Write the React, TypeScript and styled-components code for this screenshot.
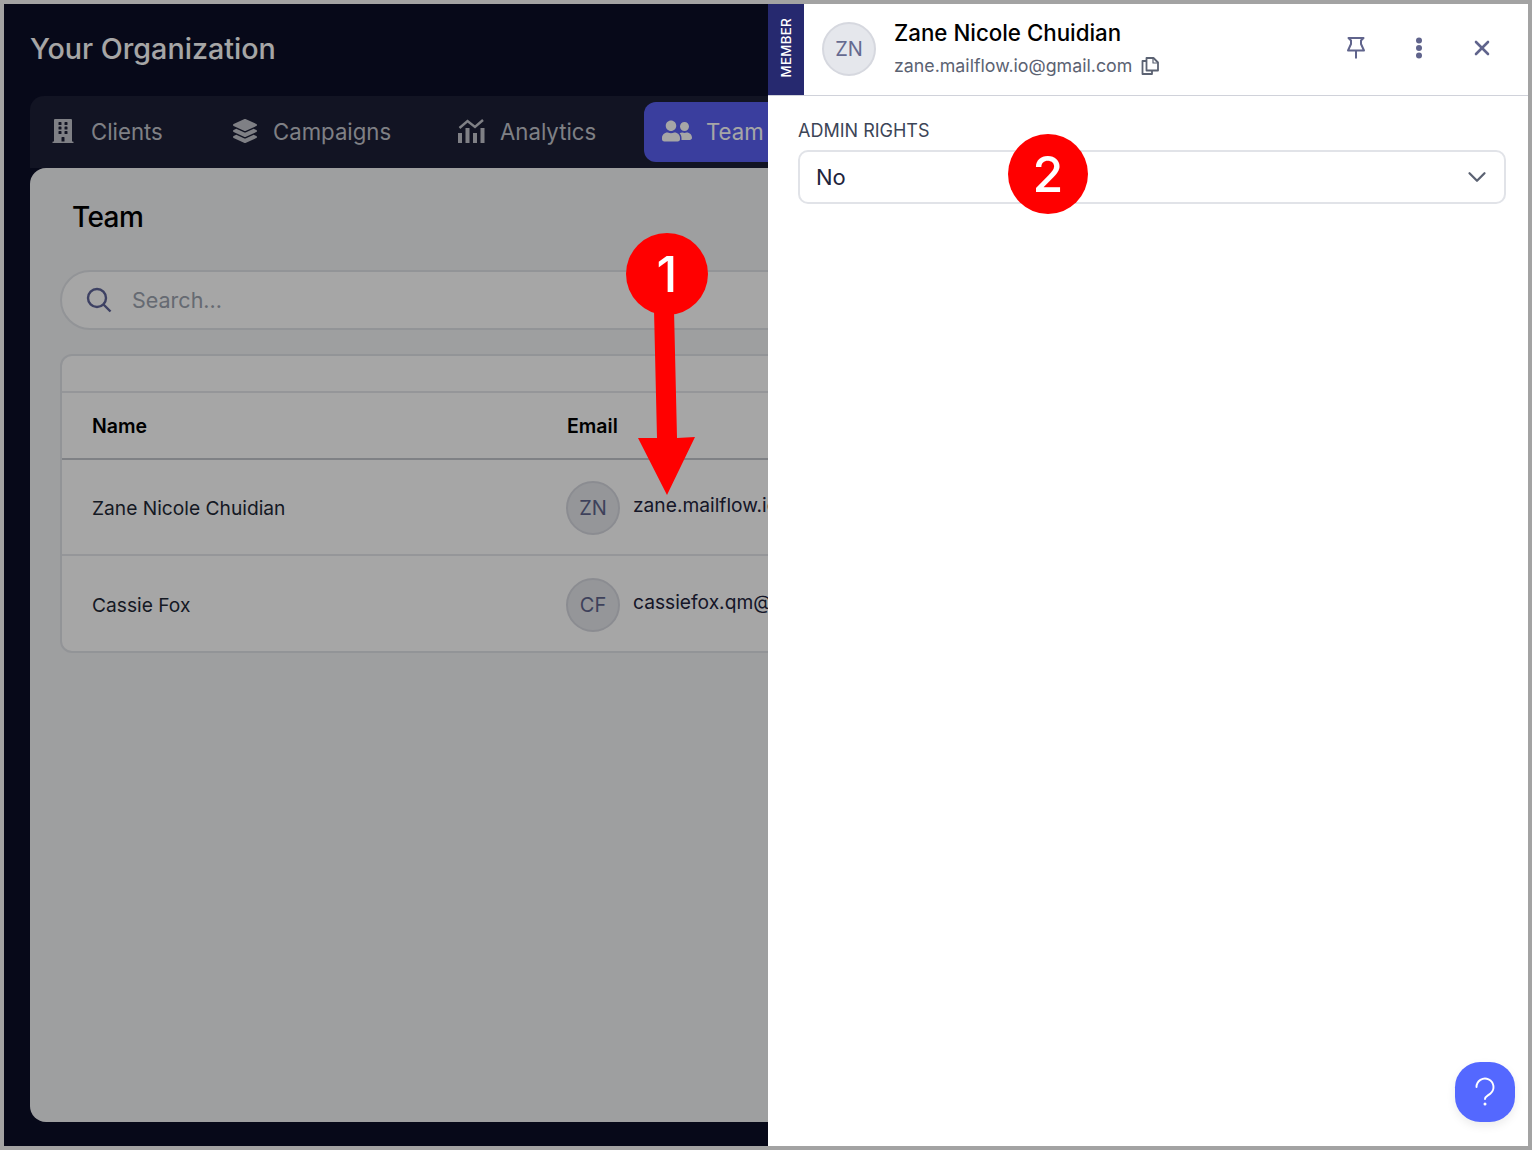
import React from 'react'
import styled, { createGlobalStyle } from 'styled-components'
import { FaBuilding, FaLayerGroup, FaUserFriends } from 'react-icons/fa'
import { ChevronDown, X } from 'lucide-react'

const GlobalStyle = createGlobalStyle`
	html, body {
		margin: 0;
		padding: 0;
		background: #a3a3a3;
	}
	* {
		box-sizing: border-box;
	}
	body {
		font-family: Inter, 'Liberation Sans', sans-serif;
	}
`

const members = [
	{ name: 'Zane Nicole Chuidian', initials: 'ZN', email: 'zane.mailflow.io@gmail.com' },
	{ name: 'Cassie Fox', initials: 'CF', email: 'cassiefox.qm@gmail.com' },
]

const AnalyticsIcon = () => (
	<svg width="27" height="24" viewBox="0 0 27 24" fill="currentColor">
		<rect x="0" y="14" width="4" height="10" />
		<rect x="7.500" y="9" width="4" height="15" />
		<rect x="15" y="14" width="4" height="10" />
		<rect x="22.500" y="9" width="4" height="15" />
		<path d="M1.500 9 L9.500 2 L17 8 L25 1" fill="none" stroke="currentColor" strokeWidth="2.400" />
	</svg>
)

const CopyIcon = () => (
	<svg width="18" height="18" viewBox="0 0 18 18" fill="none" stroke="currentColor" strokeWidth="1.800" strokeLinejoin="round">
		<path d="M5.500 1h7l4.500 4.500v8H5.500z" />
		<path d="M5.500 4H1.500V17H11V13.500" />
		<path d="M12 1.500V6H16.500" strokeWidth="1.200" />
	</svg>
)

const PinIcon = () => (
	<svg width="20" height="24" viewBox="0 0 20 24" fill="none" stroke="currentColor" strokeWidth="2" strokeLinejoin="round">
		<path d="M2.500 2H17.500L15 4.500V8L18 14.500H2L5 8V4.500ZM10 14.500V22.500" />
	</svg>
)

const KebabIcon = () => (
	<svg width="8" height="22" viewBox="0 0 8 22" fill="currentColor">
		<circle cx="4" cy="3.500" r="3" />
		<circle cx="4" cy="11" r="3" />
		<circle cx="4" cy="18.500" r="3" />
	</svg>
)

const SearchIcon = () => (
	<svg width="26" height="26" viewBox="0 0 26 26" fill="none" stroke="currentColor" strokeWidth="2.400">
		<circle cx="11" cy="11" r="9" />
		<path d="M17.500 17.500L24.500 24.500" />
	</svg>
)

const QuestionIcon = () => (
	<svg width="60" height="60" viewBox="0 0 60 60" fill="none" stroke="#fff" strokeWidth="1.900" strokeLinecap="round">
		<path d="M21.500 25a8.500 8.500 0 1 1 14 6.500c-3 2.500-5.500 3-5.500 5.500" />
		<circle cx="30" cy="42" r="1.500" fill="#fff" stroke="none" />
	</svg>
)

export default function App() {
	return (
		<>
			<GlobalStyle />
			<Frame>
				<Screen>
					<Main>
						<OrgTitle>Your Organization</OrgTitle>
						<TabBar>
							<Tab $width={182}>
								<FaBuilding size={24} />
								Clients
							</Tab>
							<Tab $width={225}>
								<FaLayerGroup size={24} />
								Campaigns
							</Tab>
							<Tab $width={206} $gap={15}>
								<AnalyticsIcon />
								Analytics
							</Tab>
							<Tab $active $width={150} $pad={18} $gap={14}>
								<FaUserFriends size={30} />
								Team
							</Tab>
						</TabBar>
						<Card>
							<CardTitle>Team</CardTitle>
							<SearchBox>
								<SearchGlyph>
									<SearchIcon />
								</SearchGlyph>
								<SearchText>Search...</SearchText>
							</SearchBox>
							<Table>
								<TableTop />
								<HeadRow>
									<NameCell>Name</NameCell>
									<EmailCell>Email</EmailCell>
								</HeadRow>
								{members.map((m) => (
									<Row key={m.email}>
										<NameCell>{m.name}</NameCell>
										<EmailCell>
											<RowAvatar>{m.initials}</RowAvatar>
											<EmailText>{m.email}</EmailText>
										</EmailCell>
									</Row>
								))}
							</Table>
						</Card>
					</Main>
					<Overlay />
					<Drawer>
						<DrawerHead>
							<MemberStrip>
								<MemberLabel>MEMBER</MemberLabel>
							</MemberStrip>
							<HeadAvatar>ZN</HeadAvatar>
							<HeadInfo>
								<HeadName>Zane Nicole Chuidian</HeadName>
								<HeadEmail>
									zane.mailflow.io@gmail.com
									<CopyIcon />
								</HeadEmail>
							</HeadInfo>
							<HeadActions>
								<ActionSlot>
									<PinIcon />
								</ActionSlot>
								<ActionSlot>
									<KebabIcon />
								</ActionSlot>
								<ActionSlot>
									<X size={24} strokeWidth={2.6} />
								</ActionSlot>
							</HeadActions>
						</DrawerHead>
						<DrawerBody>
							<FieldLabel>ADMIN RIGHTS</FieldLabel>
							<SelectBox>
								No
								<ChevronDown size={30} strokeWidth={1.8} color="#5b6272" />
							</SelectBox>
						</DrawerBody>
						<HelpButton>
							<QuestionIcon />
						</HelpButton>
					</Drawer>
					<Arrow width="60" height="190" viewBox="0 0 60 190">
						<path d="M18 0H38L41 128L59 127L31 185L2 128L21 128Z" fill="#ff0000" />
					</Arrow>
					<Badge $x={622} $y={229} $size={82}>1</Badge>
					<Badge $x={1004} $y={130} $size={80}>2</Badge>
				</Screen>
			</Frame>
		</>
	)
}

const Frame = styled.div`
	width: 1532px;
	height: 1150px;
	padding: 4px;
	background: #a3a3a3;
`

const Screen = styled.div`
	position: relative;
	width: 1524px;
	height: 1142px;
	overflow: hidden;
	background: #0b0e27;
`

const Main = styled.main`
	height: 100%;
	padding: 0 26px 24px;
	display: flex;
	flex-direction: column;
`

const OrgTitle = styled.h1`
	margin: 0;
	height: 92px;
	padding-top: 27px;
	font-size: 28.700px;
	line-height: 36px;
	font-weight: 500;
	color: #fff;
`

const TabBar = styled.nav`
	height: 72px;
	padding: 6px 0 6px 1px;
	display: flex;
	align-items: stretch;
	background: #1c1f36;
	border-radius: 14px 14px 0 0;
`

const Tab = styled.div<{ $active?: boolean; $width: number; $pad?: number; $gap?: number }>`
	width: ${(p) => p.$width}px;
	padding-bottom: 2px;
	display: flex;
	align-items: center;
	gap: ${(p) => p.$gap ?? 16}px;
	padding-left: ${(p) => p.$pad ?? 20}px;
	font-size: 22.200px;
	color: ${(p) => (p.$active ? '#fff' : '#c3c5cc')};
	background: ${(p) => (p.$active ? '#5a60f3' : 'transparent')};
	border-radius: 12px;
`

const Card = styled.section`
	flex: 1;
	padding: 31px 30px 0;
	background: #f3f4f6;
	border-radius: 16px;
`

const CardTitle = styled.h2`
	margin: 0 0 35px 12px;
	font-size: 28px;
	line-height: 36px;
	font-weight: 500;
	letter-spacing: -0.6px;
	color: #000;
`

const SearchBox = styled.div`
	height: 60px;
	display: flex;
	align-items: center;
	gap: 20px;
	padding-left: 24px;
	background: #fff;
	border: 2px solid #e1e3e8;
	border-radius: 30px;
`

const SearchGlyph = styled.span`
	display: flex;
	color: #5f6499;
`

const SearchText = styled.span`
	font-size: 21.500px;
	color: #9ca3af;
`

const Table = styled.div`
	margin-top: 24px;
	background: #fff;
	border: 2px solid #e1e3e8;
	border-radius: 12px;
`

const TableTop = styled.div`
	height: 37px;
	border-bottom: 2px solid #e5e7eb;
`

const HeadRow = styled.div`
	height: 67px;
	display: flex;
	align-items: center;
	border-bottom: 2px solid #c4c7cd;
	font-size: 19.500px;
	font-weight: 600;
	color: #000;
`

const Row = styled.div`
	height: 96px;
	padding-top: 2px;
	display: flex;
	align-items: center;
	border-bottom: 2px solid #e5e7eb;
	font-size: 19.200px;
	color: #1f2937;

	&:last-child {
		border-bottom: none;
		height: 95px;
	}
`

const NameCell = styled.div`
	width: 505px;
	padding-left: 30px;
`

const EmailCell = styled.div`
	display: flex;
	align-items: center;
	gap: 13px;
`

const Avatar = styled.div`
	width: 54px;
	height: 54px;
	display: flex;
	align-items: center;
	justify-content: center;
	background: #e5e7ec;
	border: 2px solid #d6d8df;
	border-radius: 50%;
	font-size: 20px;
	color: #60658c;
`

const RowAvatar = styled(Avatar)`
	margin-left: -1px;
`

const EmailText = styled.span`
	margin-top: -6px;
	font-size: 19.200px;
	color: #22243c;
`

const Overlay = styled.div`
	position: absolute;
	inset: 0;
	background: rgba(0, 0, 0, 0.35);
`

const Drawer = styled.aside`
	position: absolute;
	top: 0;
	right: 0;
	bottom: 0;
	width: 760px;
	background: #fff;
`

const DrawerHead = styled.header`
	height: 92px;
	display: flex;
	align-items: center;
	border-bottom: 1px solid #d0d2da;
`

const MemberStrip = styled.div`
	align-self: stretch;
	width: 36px;
	padding-bottom: 4px;
	display: flex;
	align-items: center;
	justify-content: center;
	background: #26296f;
`

const MemberLabel = styled.span`
	writing-mode: vertical-rl;
	transform: rotate(180deg);
	font-size: 13.300px;
	font-weight: 500;
	letter-spacing: 0.3px;
	color: #fff;
`

const HeadAvatar = styled(Avatar)`
	margin: -2px 0 0 18px;
	color: #656a90;
`

const HeadInfo = styled.div`
	margin-left: 18px;
	flex: 1;
`

const HeadName = styled.div`
	font-size: 22.300px;
	line-height: 30px;
	font-weight: 500;
	color: #000;
`

const HeadEmail = styled.div`
	display: flex;
	align-items: center;
	gap: 9px;
	margin-top: 2px;
	font-size: 17.800px;
	line-height: 32px;
	color: #5b6272;
`

const HeadActions = styled.div`
	display: flex;
	gap: 23px;
	margin-top: -3px;
	padding-right: 26px;
	color: #60648c;
`

const ActionSlot = styled.div`
	width: 40px;
	height: 40px;
	display: flex;
	align-items: center;
	justify-content: center;
`

const DrawerBody = styled.div`
	padding: 24px 22px 0 30px;
`

const FieldLabel = styled.div`
	font-size: 18px;
	line-height: 22px;
	color: #3c4557;
`

const SelectBox = styled.div`
	margin-top: 8px;
	height: 54px;
	display: flex;
	align-items: center;
	justify-content: space-between;
	padding: 0 12px 0 16px;
	border: 2px solid #e1e3e8;
	border-radius: 10px;
	font-size: 22px;
	color: #22243c;
`

const HelpButton = styled.div`
	position: absolute;
	right: 13px;
	bottom: 24px;
	width: 60px;
	height: 60px;
	display: flex;
	background: #5468ff;
	border-radius: 42%;
	box-shadow: 0 4px 10px rgba(0, 0, 0, 0.08);
`

const Arrow = styled.svg`
	position: absolute;
	left: 632px;
	top: 306px;
`

const Badge = styled.div<{ $x: number; $y: number; $size: number }>`
	position: absolute;
	left: ${(p) => p.$x}px;
	top: ${(p) => p.$y}px;
	width: ${(p) => p.$size}px;
	height: ${(p) => p.$size}px;
	display: flex;
	align-items: center;
	justify-content: center;
	background: #ff0000;
	border-radius: 50%;
	font-size: 50px;
	font-weight: 500;
	color: #fff;
`
